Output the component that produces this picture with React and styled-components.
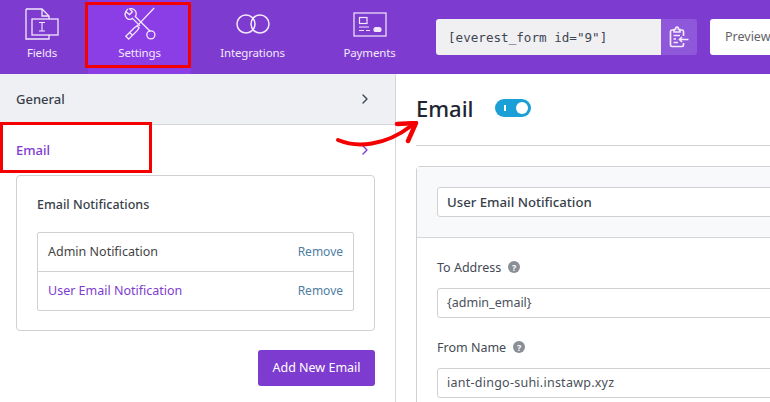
import React from "react";
import styled, { createGlobalStyle } from "styled-components";
import { ChevronRight } from "lucide-react";

const GlobalStyle = createGlobalStyle`
  html, body {
    margin: 0;
    padding: 0;
    background: #fff;
  }
  * {
    box-sizing: border-box;
  }
`;

const FieldsIcon = () => (
  <svg width="34" height="32" viewBox="0 0 34 32" fill="none" stroke="#f3e9fb" strokeWidth="1.3">
    <path d="M1 1H17L24 8V11" />
    <path d="M17 1V8H24" />
    <path d="M1 1V31H24V27" />
    <rect x="7" y="11" width="26" height="16" />
    <path d="M17 14V23M14 14.5H20M14 23H20" strokeWidth="1.1" />
  </svg>
);

const SettingsIcon = () => (
  <svg width="34" height="34" viewBox="0 0 36 36" fill="none" stroke="#f3e9fb" strokeWidth="1.4">
    <path d="M33 1L15 20" />
    <path d="M15 20L12 22L3 31L6 34L15 25L17 22Z" />
    <path d="M7 27L10 30" />
    <path d="M5 2L3 5L7 8L10 5L7 2C10 1 14 3 14 7C14 8 14 9 13 10L29 26" />
    <path d="M3 5C1 8 3 12 6 13C8 13.5 9 13 10 12L18 20" />
    <circle cx="29.5" cy="29.5" r="4.3" />
  </svg>
);

const IntegrationsIcon = () => (
  <svg width="34" height="20" viewBox="0 0 34 20" fill="none" stroke="#f3e9fb" strokeWidth="1.5">
    <circle cx="10" cy="10" r="9" />
    <circle cx="24" cy="10" r="9" />
  </svg>
);

const PaymentsIcon = () => (
  <svg width="34" height="25" viewBox="0 0 34 25" fill="none" stroke="#f3e9fb" strokeWidth="1.2">
    <rect x="1" y="1" width="32" height="23" />
    <rect x="6.5" y="5.5" width="7.5" height="6" />
    <path d="M6 15H16M6 18.5H11M13 18.5H17" />
    <rect x="21" y="15.5" width="7" height="4" rx="2" fill="#f3e9fb" />
  </svg>
);

const ClipboardIcon = () => (
  <svg width="20" height="22" viewBox="0 0 20 22" fill="none" stroke="#f3e9fb" strokeWidth="1.7">
    <path d="M6 4H3C2 4 1.5 4.5 1.5 5.5V19C1.5 20 2 20.5 3 20.5H13C14 20.5 14.5 20 14.5 19V17" />
    <path d="M14.5 10V5.5C14.5 4.500 14 4 13 4H10" />
    <path d="M5 6V3.500H6.500C6.500 2 7 1.200 8 1.200C9 1.200 9.500 2 9.500 3.500H11V6Z" />
    <path d="M4.500 9.500H11M4.500 13H7M4.500 16.500H9" />
    <path d="M19.500 13.500H10.500M13 11L10.500 13.500L13 16" />
  </svg>
);

const tabs = [
  { label: "Fields", width: 88, inset: 4, icon: <FieldsIcon /> },
  { label: "Settings", width: 103, icon: <SettingsIcon />, active: true },
  { label: "Integrations", width: 123, icon: <IntegrationsIcon /> },
  { label: "Payments", width: 111, icon: <PaymentsIcon /> },
];

const App = () => {
  return (
    <Page>
      <GlobalStyle />
      <Header>
        {tabs.map((tab) => (
          <Tab key={tab.label} $active={tab.active} $width={tab.width} $inset={tab.inset}>
            <TabIcon>{tab.icon}</TabIcon>
            <TabLabel>{tab.label}</TabLabel>
          </Tab>
        ))}
        <Shortcode>
          <ShortcodeText>[everest_form id="9"]</ShortcodeText>
          <CopyButton>
            <ClipboardIcon />
          </CopyButton>
        </Shortcode>
        <PreviewButton>Preview</PreviewButton>
      </Header>

      <Body>
        <Sidebar>
          <SectionRow $grey>
            General
            <ChevronRight size={16} strokeWidth={2} color="#3d4450" />
          </SectionRow>
          <SectionRow $active>
            Email
            <ChevronRight size={16} strokeWidth={2} color="#7e3bd0" />
          </SectionRow>
          <NotificationCard>
            <CardTitle>Email Notifications</CardTitle>
            <NotificationList>
              <NotificationRow>
                <span>Admin Notification</span>
                <RemoveLink>Remove</RemoveLink>
              </NotificationRow>
              <NotificationRow $active>
                <span>User Email Notification</span>
                <RemoveLink>Remove</RemoveLink>
              </NotificationRow>
            </NotificationList>
          </NotificationCard>
          <AddRow>
            <AddButton>Add New Email</AddButton>
          </AddRow>
        </Sidebar>

        <Main>
          <TitleRow>
            <PageTitle>Email</PageTitle>
            <Toggle>
              <ToggleTick />
              <ToggleKnob />
            </Toggle>
          </TitleRow>
          <FormCard>
            <FormCardHeader>
              <TextBox $bold>User Email Notification</TextBox>
            </FormCardHeader>
            <FormCardBody>
              <FieldLabel>
                To Address <HelpDot>?</HelpDot>
              </FieldLabel>
              <TextBox>{"{admin_email}"}</TextBox>
              <FieldLabel>
                From Name <HelpDot>?</HelpDot>
              </FieldLabel>
              <TextBox $wide>iant-dingo-suhi.instawp.xyz</TextBox>
            </FormCardBody>
          </FormCard>
        </Main>
      </Body>

      <SettingsMark />
      <EmailMark />
      <Arrow width="90" height="30" viewBox="0 0 90 30" fill="none">
        <path d="M3 19C22 27 50 25 76 5" stroke="#f40000" strokeWidth="4" strokeLinecap="round" />
        <path d="M62 3L81 2L73 20" stroke="#f40000" strokeWidth="4.500" strokeLinecap="round" strokeLinejoin="round" />
      </Arrow>
    </Page>
  );
};

export default App;

const fontStack = `"Noto Sans", "Open Sans", sans-serif`;

const Page = styled.div`
  position: relative;
  width: 770px;
  height: 402px;
  overflow: hidden;
  background: #fff;
  font-family: ${fontStack};
`;

const Header = styled.header`
  display: flex;
  align-items: stretch;
  height: 74px;
  background: #7e3bd0;
`;

const Tab = styled.div`
  display: flex;
  flex: none;
  flex-direction: column;
  align-items: center;
  width: ${(props) => props.$width}px;
  padding-right: ${(props) => props.$inset || 0}px;
  color: #f3e9fb;
  background: ${(props) => (props.$active ? "#8b3de6" : "transparent")};
`;

const TabIcon = styled.div`
  display: flex;
  align-items: center;
  justify-content: center;
  height: 40px;
  margin-top: 4px;
`;

const TabLabel = styled.div`
  font-size: 11.5px;
  letter-spacing: -0.15px;
  line-height: 17px;
  white-space: nowrap;
`;

const Shortcode = styled.div`
  display: flex;
  flex: none;
  align-self: center;
  width: 261px;
  height: 36px;
  margin-left: 11px;
  border-radius: 3px;
  overflow: hidden;
`;

const ShortcodeText = styled.div`
  flex: 1;
  padding-left: 12px;
  font-family: "DejaVu Sans Mono", monospace;
  font-size: 12.6px;
  line-height: 37px;
  color: #3f4652;
  background: #f0f0f3;
`;

const CopyButton = styled.div`
  display: flex;
  align-items: center;
  justify-content: center;
  width: 36px;
  background: #8f57d9;
`;

const PreviewButton = styled.div`
  flex: none;
  align-self: center;
  width: 100px;
  height: 36px;
  margin-left: 13px;
  padding-left: 15px;
  border-radius: 3px;
  background: #fff;
  color: #5f6368;
  font-size: 12.5px;
  line-height: 36px;
`;

const Body = styled.div`
  display: flex;
  height: 328px;
`;

const Sidebar = styled.aside`
  flex: none;
  width: 396px;
  border-right: 1px solid #d5d5da;
`;

const SectionRow = styled.div`
  display: flex;
  align-items: center;
  justify-content: space-between;
  height: ${(props) => (props.$grey ? "51px" : "50px")};
  padding: 0 22px 0 16px;
  font-size: 13px;
  font-weight: 500;
  color: ${(props) => (props.$active ? "#7e3bd0" : "#383f4a")};
  background: ${(props) => (props.$grey ? "#eff0f4" : "#fff")};
  border-bottom: ${(props) => (props.$grey ? "1px solid #d5d5da" : "none")};
`;

const NotificationCard = styled.div`
  width: 359px;
  height: 156px;
  margin-left: 16px;
  padding: 0 20px;
  border: 1px solid #d0d0d5;
  border-radius: 4px;
`;

const CardTitle = styled.div`
  height: 56px;
  font-size: 12.5px;
  font-weight: 500;
  line-height: 58px;
  color: #383f4a;
`;

const NotificationList = styled.div`
  border: 1px solid #d0d0d5;
  border-radius: 2px;
`;

const NotificationRow = styled.div`
  display: flex;
  align-items: center;
  justify-content: space-between;
  height: 38px;
  padding: 0 10px 1px;
  font-size: 12.5px;
  color: ${(props) => (props.$active ? "#7e3bd0" : "#444")};

  & + & {
    height: 39px;
    border-top: 1px solid #d0d0d5;
  }
`;

const RemoveLink = styled.span`
  color: #4f7ea3;
  font-size: 12px;
`;

const AddRow = styled.div`
  display: flex;
  justify-content: flex-end;
  padding: 19px 20px 0 0;
`;

const AddButton = styled.div`
  width: 117px;
  height: 36px;
  border-radius: 3px;
  background: #7e3bd0;
  color: #fff;
  font-size: 12.5px;
  line-height: 36px;
  text-align: center;
`;

const Main = styled.main`
  flex: none;
  width: 620px;
  padding-left: 20px;
`;

const TitleRow = styled.div`
  display: flex;
  align-items: center;
  gap: 21px;
  height: 72px;
  padding-bottom: 3px;
  border-bottom: 1px solid #d0d0d5;
`;

const PageTitle = styled.h1`
  margin: 0;
  font-size: 22px;
  font-weight: 500;
  color: #1f2530;
`;

const Toggle = styled.div`
  display: flex;
  align-items: center;
  justify-content: space-between;
  width: 36px;
  height: 18px;
  padding: 0 3px 0 9px;
  border-radius: 9px;
  background: #1a9fd6;
`;

const ToggleTick = styled.span`
  width: 2px;
  height: 6px;
  background: #fff;
`;

const ToggleKnob = styled.span`
  width: 12px;
  height: 12px;
  border-radius: 50%;
  background: #fff;
`;

const FormCard = styled.section`
  margin-top: 20px;
  border: 1px solid #d0d0d5;
  border-radius: 4px 0 0 0;
`;

const FormCardHeader = styled.div`
  padding: 20px;
  background: #f8f9fa;
  border-bottom: 1px solid #d5d5da;
`;

const FormCardBody = styled.div`
  padding: 0 20px 20px;
`;

const TextBox = styled.div`
  height: 30px;
  padding-left: 9px;
  border: 1px solid #d0d0d5;
  border-radius: 3px;
  background: #fff;
  font-size: ${(props) => (props.$bold ? "13.2px" : "12.5px")};
  font-weight: ${(props) => (props.$bold ? 500 : 400)};
  letter-spacing: ${(props) => (props.$wide ? "0.25px" : "0")};
  line-height: 28px;
  color: ${(props) => (props.$bold ? "#383f4a" : "#4a505a")};
`;

const FieldLabel = styled.div`
  display: flex;
  align-items: center;
  gap: 7px;
  height: 50px;
  padding-top: 8px;
  font-size: 12.5px;
  color: #444a54;
`;

const HelpDot = styled.span`
  display: inline-flex;
  align-items: center;
  justify-content: center;
  width: 12px;
  height: 12px;
  border-radius: 50%;
  background: #8a8f96;
  color: #fff;
  font-size: 9px;
  font-weight: 700;
`;

const SettingsMark = styled.div`
  position: absolute;
  left: 85px;
  top: 2px;
  width: 106px;
  height: 66px;
  border: 3px solid #f40000;
`;

const EmailMark = styled.div`
  position: absolute;
  left: 0;
  top: 122px;
  width: 152px;
  height: 51px;
  border: 3px solid #f40000;
`;

const Arrow = styled.svg`
  position: absolute;
  left: 335px;
  top: 121px;
`;
